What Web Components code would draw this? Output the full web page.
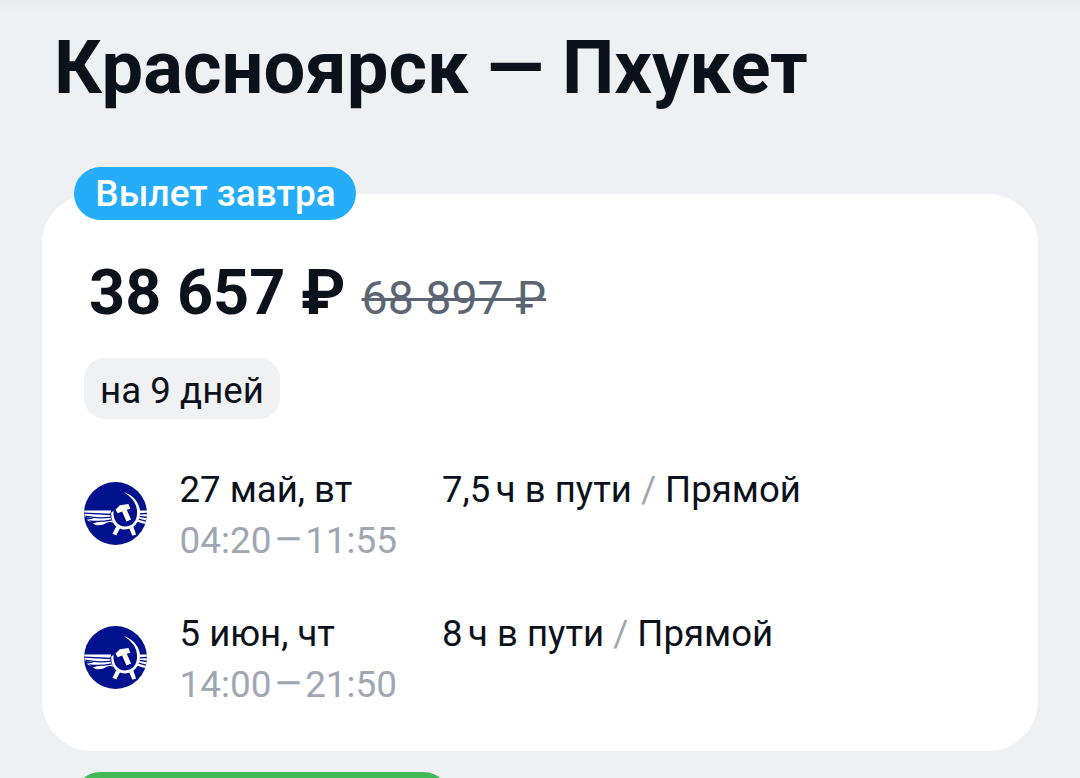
<!DOCTYPE html>
<html lang="ru">
<head>
<meta charset="UTF-8">
<title>Красноярск — Пхукет</title>
<style>
  body {
    margin: 0;
    height: 778px;
    overflow: hidden;
    background: #eeeff3;
    color: #0b121c;
    font-family: Roboto, "Liberation Sans", sans-serif;
  }
</style>
</head>
<body>
<deal-page>
  <span slot="title">Красноярск — Пхукет</span>
  <deal-card badge="Вылет завтра" price="38 657 ₽" old-price="68 897 ₽" stay="на 9 дней">
    <flight-row date="27 май, вт" from="04:20" to="11:55" hours="7,5" stops="Прямой"></flight-row>
    <flight-row date="5 июн, чт" from="14:00" to="21:50" hours="8" stops="Прямой"></flight-row>
  </deal-card>
  <next-badge></next-badge>
</deal-page>

<script>
// --- Page with route title ---
class DealPage extends HTMLElement {
  constructor() {
    super();
    this.attachShadow({ mode: 'open' });
  }

  connectedCallback() {
    this.shadowRoot.innerHTML = `
      <style>
        :host {
          display: flex;
          flex-direction: column;
          box-sizing: border-box;
          height: 778px;
          padding: 24px 42px 0;
          overflow: hidden;
          background: linear-gradient(#eaebef, #eff0f4 14px);
        }
        h1 {
          margin: 0 0 55px 12px;
          font-size: 74.1px;
          line-height: 88px;
          font-weight: 700;
          white-space: nowrap;
        }
      </style>
      <h1><slot name="title"></slot></h1>
      <slot></slot>
    `;
  }
}
customElements.define('deal-page', DealPage);

// --- Airline logo ---
class AirlineLogo extends HTMLElement {
  constructor() {
    super();
    this.attachShadow({ mode: 'open' });
  }

  connectedCallback() {
    this.shadowRoot.innerHTML = `
      <style>
        :host { display: block; width: 63px; height: 63px; }
        svg { display: block; width: 100%; height: 100%; }
      </style>
      <svg viewBox="0 0 190 190">
        <defs><clipPath id="disc"><circle cx="95" cy="95" r="95"/></clipPath></defs>
        <g clip-path="url(#disc)">
          <rect width="190" height="190" fill="#02128c"/>
          <path fill="#fff" d="M0 86H82L79 98L83 114L90 124Q80 118 68 123Q54 133 36 130L26 125L44 120L18 120L8 114L30 110L2 105ZM164 86H190V127L178 125L162 120L156 116L164 104Z"/>
          <g fill="none" stroke="#02128c" stroke-width="4">
            <path d="M0 94L82 98M4 103Q46 112 82 106M16 117Q48 122 84 114M190 95L164 96M190 107L160 103M187 118L156 110"/>
          </g>
          <path fill="#fff" d="M97 134L109 139L97 161L86 156ZM136 139L148 132L157 158L146 162Z"/>
          <circle cx="123" cy="94" r="42" fill="#02128c"/>
          <path fill="#fff" d="M120 30C151 41 170 66 169 93C168 123 149 143 123 143C98 143 81 123 82 93L89 87V94C89 117 103 134 124 134C146 134 161 117 160 90C160 64 143 45 120 30Z"/>
          <path fill="#fff" d="M95 83L108 70L134 66L140 81L129 84L142 113L128 119L115 89L101 94Z"/>
        </g>
      </svg>
    `;
  }
}
customElements.define('airline-logo', AirlineLogo);

// --- One flight of the trip ---
class FlightRow extends HTMLElement {
  constructor() {
    super();
    this.attachShadow({ mode: 'open' });
  }

  connectedCallback() {
    const date = this.getAttribute('date');
    const from = this.getAttribute('from');
    const to = this.getAttribute('to');
    const hours = this.getAttribute('hours');
    const stops = this.getAttribute('stops');

    this.shadowRoot.innerHTML = `
      <style>
        :host {
          display: grid;
          grid-template-columns: 95.5px 262.5px 1fr;
          height: 102px;
          font-size: 36.6px;
          line-height: 51px;
          white-space: nowrap;
        }
        airline-logo { margin-top: 18px; }
        .time, .slash { color: #9ea7b3; }
        .time { font-size: 36.9px; }
        .dash {
          margin: 0 4px;
          font-size: 33px;
          line-height: 0;
          vertical-align: 2px;
          -webkit-text-stroke: 0.4px currentColor;
        }
        .hours { margin-right: -2px; }
      </style>
      <airline-logo></airline-logo>
      <div>
        <div class="date">${date}</div>
        <div class="time">${from}<span class="dash">—</span>${to}</div>
      </div>
      <div class="info"><span class="hours">${hours}</span>&#8201;ч в пути <span class="slash">/</span> ${stops}</div>
    `;
  }
}
customElements.define('flight-row', FlightRow);

// --- Card with the price ---
class DealCard extends HTMLElement {
  constructor() {
    super();
    this.attachShadow({ mode: 'open' });
  }

  connectedCallback() {
    const badge = this.getAttribute('badge');
    const price = this.getAttribute('price');
    const oldPrice = this.getAttribute('old-price');
    const stay = this.getAttribute('stay');

    this.shadowRoot.innerHTML = `
      <style>
        :host { display: block; }
        .badge {
          position: relative;
          display: flex;
          align-items: center;
          justify-content: center;
          box-sizing: border-box;
          width: 282px;
          height: 53px;
          margin: 0 0 -26px 32px;
          padding-left: 1px;
          border-radius: 27px;
          background: #25adf9;
          color: #fff;
          font-size: 37px;
          font-weight: 500;
          white-space: nowrap;
        }
        .card {
          box-sizing: border-box;
          height: 557px;
          padding: 61px 42px 0;
          border-radius: 50px;
          background: #fff;
        }
        .prices {
          display: flex;
          align-items: baseline;
          gap: 16px;
          height: 76px;
          margin-left: 5px;
          line-height: 76px;
          white-space: nowrap;
        }
        .price { font-size: 63px; font-weight: 700; }
        .old {
          font-size: 46.5px;
          color: #5c6574;
          text-decoration: line-through;
          text-decoration-thickness: 3px;
        }
        .stay {
          box-sizing: border-box;
          width: 196px;
          height: 61px;
          margin-top: 27px;
          padding-top: 3px;
          border-radius: 21px;
          background: #eff1f3;
          font-size: 36.7px;
          line-height: 59px;
          text-align: center;
          white-space: nowrap;
        }
        .flights {
          display: flex;
          flex-direction: column;
          gap: 42px;
          margin-top: 45px;
        }
      </style>
      <div class="badge"><span>${badge}</span></div>
      <div class="card">
        <div class="prices">
          <span class="price">${price}</span>
          <span class="old">${oldPrice}</span>
        </div>
        <div class="stay">${stay}</div>
        <div class="flights"><slot></slot></div>
      </div>
    `;
  }
}
customElements.define('deal-card', DealCard);

// --- Badge of the following card, cut off by the screen edge ---
class NextBadge extends HTMLElement {
  constructor() {
    super();
    this.attachShadow({ mode: 'open' });
    this.shadowRoot.innerHTML = `
      <style>
        :host {
          display: block;
          flex: none;
          width: 376px;
          height: 53px;
          margin: 21px 0 0 32px;
          border-radius: 27px;
          background: #41b957;
        }
      </style>
    `;
  }
}
customElements.define('next-badge', NextBadge);
</script>
</body>
</html>
